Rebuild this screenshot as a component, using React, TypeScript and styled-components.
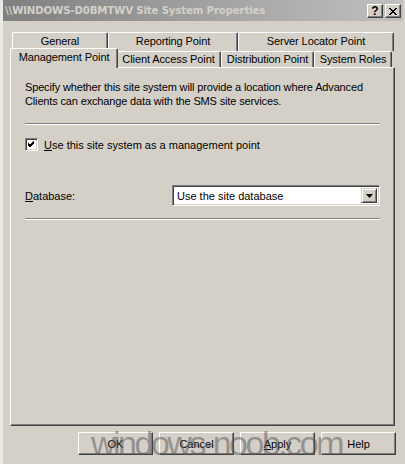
import React from "react";
import styled, { createGlobalStyle } from "styled-components";

const Global = createGlobalStyle`
  html, body { margin: 0; padding: 0; background: #d4d0c8; }
  * { box-sizing: border-box; }
`;

const Window = styled.div`
  position: relative;
  width: 405px;
  height: 464px;
  overflow: hidden;
  background: #d4d0c8;
  font-family: "Liberation Sans", Arial, sans-serif;
  font-size: 11px;
  color: #000;
  display: flex;
  flex-direction: column;
  border-left: 3px solid #eceae4;
`;

const TitleBar = styled.div`
  height: 21px;
  margin-right: 2px;
  display: flex;
  align-items: center;
  justify-content: space-between;
  padding: 0 2px 0 2px;
  background: linear-gradient(to right, #808080 0%, #a4a4a4 55%, #c0c0c0 100%);
`;

const TitleText = styled.div`
  font-family: "DejaVu Sans", Verdana, sans-serif;
  font-weight: bold;
  font-size: 10.2px;
  color: #d4d0c8;
  white-space: nowrap;
  letter-spacing: -0.15px;
`;

const TitleButtons = styled.div`
  display: flex;
  gap: 2px;
  padding-top: 1px;
`;

const TitleButton = styled.div`
  width: 16px;
  height: 14px;
  background: #d4d0c8;
  border-top: 1px solid #fff;
  border-left: 1px solid #fff;
  border-right: 1px solid #404040;
  border-bottom: 1px solid #404040;
  box-shadow: inset -1px -1px 0 #808080;
  display: flex;
  align-items: center;
  justify-content: center;
  font-family: "Liberation Sans", Arial, sans-serif;
  font-weight: bold;
  font-size: 12px;
  line-height: 1;
`;

const Content = styled.div`
  display: flex;
  flex-direction: column;
  padding: 11px 0 0 7px;
`;

const TabStrip = styled.div`
  display: flex;
  flex-direction: column;
  width: 385px;
`;

const TabRow = styled.div<{ $h: number }>`
  display: flex;
  align-items: flex-end;
  height: ${(p) => p.$h}px;
  padding-left: 2px;
`;

const Tab = styled.div<{ $w: number; $selected?: boolean; $back?: boolean }>`
  position: relative;
  width: ${(p) => p.$w}px;
  height: ${(p) => (p.$selected ? 20 : p.$back ? 19 : 16)}px;
  margin: ${(p) => (p.$selected ? "0 -2px -1px -2px" : "0")};
  z-index: ${(p) => (p.$selected ? 2 : 1)};
  background: #d4d0c8;
  border-top: 1px solid #fff;
  border-left: 1px solid #fff;
  border-right: 1px solid #404040;
  border-top-left-radius: 2px;
  border-top-right-radius: 2px;
  box-shadow: inset -1px 0 0 #808080;
  display: flex;
  justify-content: center;
  padding-top: ${(p) => (p.$selected ? 2 : p.$back ? 2 : 1)}px;
  white-space: nowrap;
  font-size: 11px;
  letter-spacing: -0.1px;
`;

const Panel = styled.div`
  position: relative;
  z-index: 1;
  width: 385px;
  height: 359px;
  border-top: 1px solid #fff;
  border-left: 1px solid #fff;
  border-right: 1px solid #404040;
  border-bottom: 1px solid #404040;
  box-shadow: inset -1px -1px 0 #808080;
  padding: 12px 15px 0 14px;
  display: flex;
  flex-direction: column;
`;

const Description = styled.p`
  margin: 0;
  line-height: 14px;
  font-size: 11px;
  white-space: nowrap;
  letter-spacing: -0.15px;
`;

const Separator = styled.div<{ $top: number }>`
  margin-top: ${(p) => p.$top}px;
  height: 2px;
  border-top: 1px solid #808080;
  border-bottom: 1px solid #fff;
  width: 355px;
`;

const CheckRow = styled.label`
  display: flex;
  align-items: center;
  gap: 6px;
  margin-top: 13px;
  font-size: 11px;
`;

const CheckBox = styled.span`
  width: 13px;
  height: 13px;
  background: #fff;
  border-top: 1px solid #808080;
  border-left: 1px solid #808080;
  border-right: 1px solid #fff;
  border-bottom: 1px solid #fff;
  box-shadow: inset 1px 1px 0 #404040, inset -1px -1px 0 #d4d0c8;
  display: flex;
  align-items: center;
  justify-content: center;
`;

const FieldRow = styled.div`
  display: flex;
  align-items: center;
  justify-content: space-between;
  margin-top: 34px;
  width: 355px;
  font-size: 11px;
`;

const Combo = styled.div`
  width: 208px;
  height: 21px;
  background: #fff;
  border-top: 1px solid #808080;
  border-left: 1px solid #808080;
  border-right: 1px solid #fff;
  border-bottom: 1px solid #fff;
  box-shadow: inset 1px 1px 0 #404040, inset -1px -1px 0 #d4d0c8;
  display: flex;
  align-items: center;
  justify-content: space-between;
  padding: 2px 2px 2px 4px;
  font-size: 11px;
`;

const ComboButton = styled.div`
  width: 16px;
  height: 15px;
  background: #d4d0c8;
  border-top: 1px solid #d4d0c8;
  border-left: 1px solid #d4d0c8;
  border-right: 1px solid #404040;
  border-bottom: 1px solid #404040;
  box-shadow: inset 1px 1px 0 #fff, inset -1px -1px 0 #808080;
  display: flex;
  align-items: center;
  justify-content: center;
`;

const ButtonRow = styled.div`
  display: flex;
  gap: 6px;
  margin-top: 6px;
  padding-left: 68px;
`;

const Button = styled.div`
  width: 75px;
  height: 23px;
  background: #d4d0c8;
  border-top: 1px solid #fff;
  border-left: 1px solid #fff;
  border-right: 1px solid #404040;
  border-bottom: 1px solid #404040;
  box-shadow: inset -1px -1px 0 #808080;
  display: flex;
  align-items: center;
  justify-content: center;
  font-size: 11px;
`;

const Watermark = styled.div`
  position: absolute;
  left: 88px;
  top: 424px;
  font-family: "Liberation Sans", Arial, sans-serif;
  font-size: 34px;
  letter-spacing: -2.5px;
  color: rgba(85, 85, 85, 0.5);
  white-space: nowrap;
  pointer-events: none;
`;

export default function App() {
  return (
    <Window>
      <Global />
      <TitleBar>
        <TitleText>{"\\\\WINDOWS-D0BMTWV Site System Properties"}</TitleText>
        <TitleButtons>
          <TitleButton>?</TitleButton>
          <TitleButton>
            <svg width="8" height="7" viewBox="0 0 8 7">
              <path d="M0 0 L7 7 M1 0 L8 7 M7 0 L0 7 M8 0 L1 7" stroke="#000" strokeWidth="1" />
            </svg>
          </TitleButton>
        </TitleButtons>
      </TitleBar>
      <Content>
        <TabStrip>
          <TabRow $h={19}>
            <Tab $w={96} $back>General</Tab>
            <Tab $w={130} $back>Reporting Point</Tab>
            <Tab $w={156} $back>Server Locator Point</Tab>
          </TabRow>
          <TabRow $h={16}>
            <Tab $w={108} $selected>Management Point</Tab>
            <Tab $w={105}>Client Access Point</Tab>
            <Tab $w={93}>Distribution Point</Tab>
            <Tab $w={78}>System Roles</Tab>
          </TabRow>
        </TabStrip>
        <Panel>
          <Description>
            Specify whether this site system will provide a location where Advanced
            <br />
            Clients can exchange data with the SMS site services.
          </Description>
          <Separator $top={15} />
          <CheckRow>
            <CheckBox>
              <svg width="7" height="7" viewBox="0 0 7 7">
                <path d="M0 2 L2 4 L6 0 M0 3 L2 5 L6 1 M0 4 L2 6 L6 2" stroke="#000" strokeWidth="1" fill="none" />
              </svg>
            </CheckBox>
            <span>
              <u>U</u>se this site system as a management point
            </span>
          </CheckRow>
          <FieldRow>
            <span>
              <u>D</u>atabase:
            </span>
            <Combo>
              <span>Use the site database</span>
              <ComboButton>
                <svg width="7" height="4" viewBox="0 0 7 4">
                  <path d="M0 0 H7 L3.5 4 Z" fill="#000" />
                </svg>
              </ComboButton>
            </Combo>
          </FieldRow>
          <Separator $top={12} />
        </Panel>
        <ButtonRow>
          <Button>OK</Button>
          <Button>Cancel</Button>
          <Button>
            <span>
              <u>A</u>pply
            </span>
          </Button>
          <Button>Help</Button>
        </ButtonRow>
      </Content>
      <Watermark>windows-noob.com</Watermark>
    </Window>
  );
}
